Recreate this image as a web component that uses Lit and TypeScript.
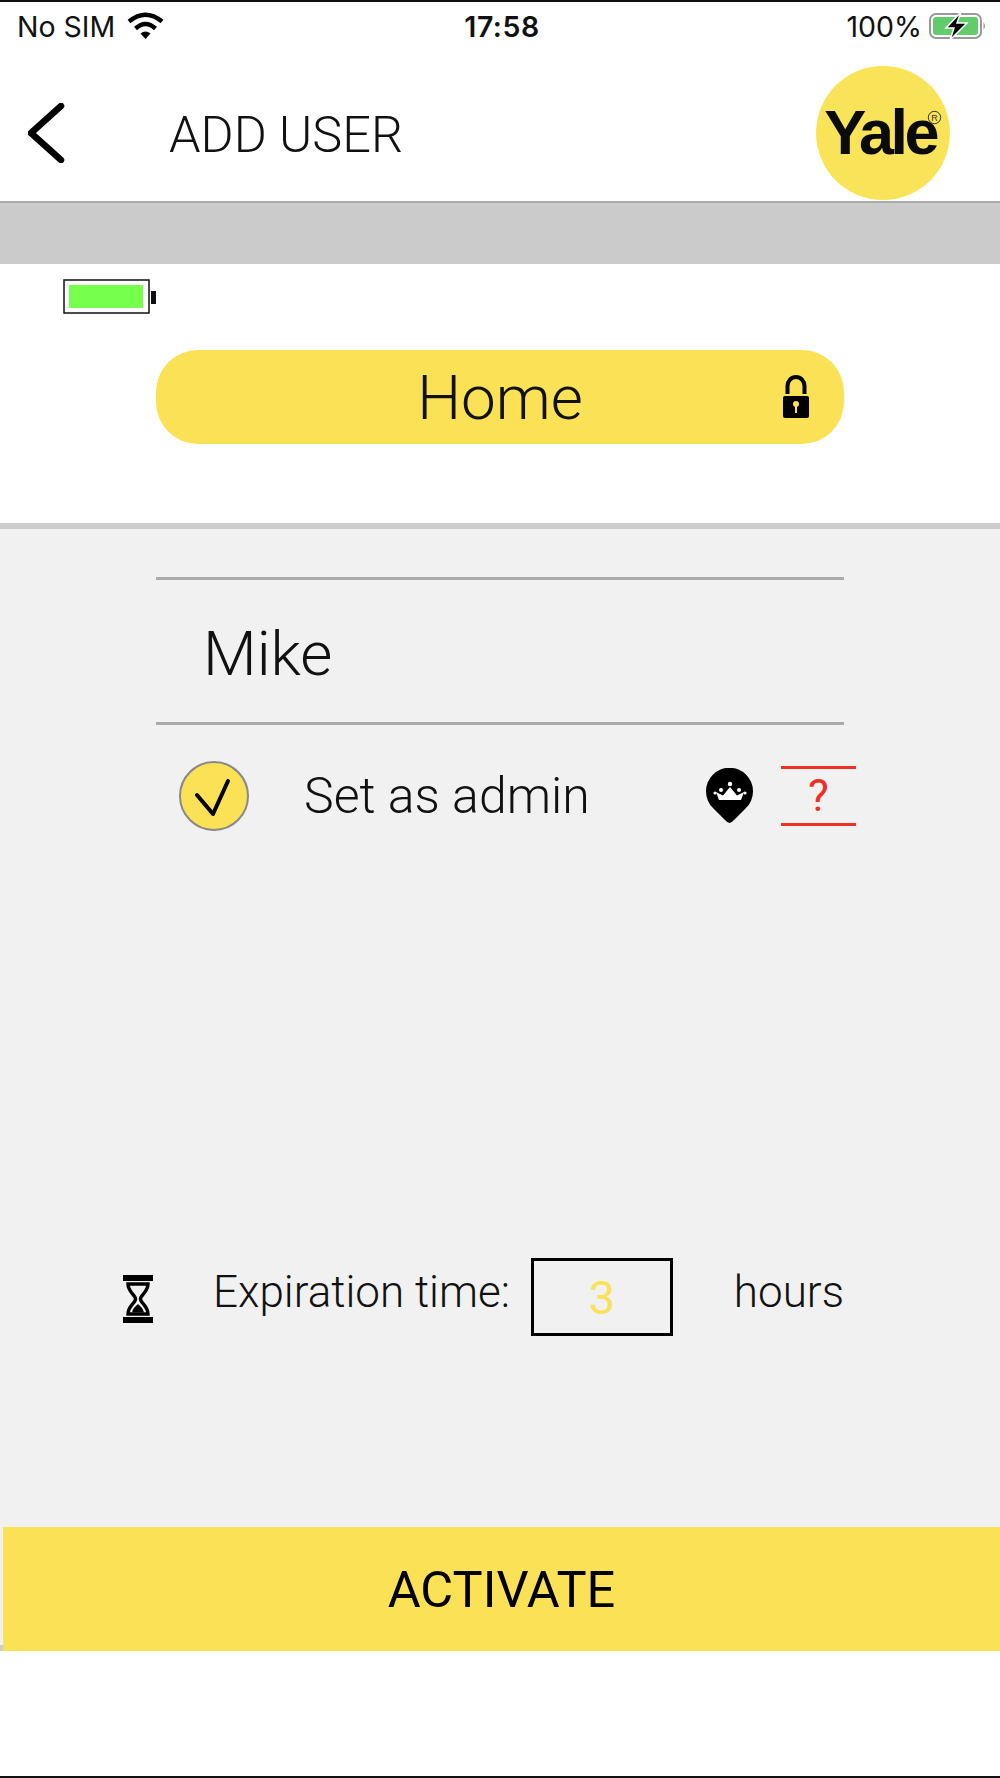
import { LitElement, html, css } from "lit";
import { customElement } from "lit/decorators.js";

@customElement("app-root")
export class AppRoot extends LitElement {
  static styles = css`
    :host { display: block; width: 1000px; height: 1778px; background: #fff; font-family: Roboto, "Liberation Sans", sans-serif; color: #111; overflow: hidden; }
    * { box-sizing: border-box; }
    .page { height: 1778px; display: flex; flex-direction: column; border-top: 2px solid #111; border-bottom: 2px solid #111; }
    .status { height: 48px; flex: none; display: grid; grid-template-columns: 1fr auto 1fr; align-items: center; padding: 0 13px 0 17px; font-size: 28.5px; font-family: Inter, Roboto, sans-serif; }
    .status .left, .status .right { display: flex; align-items: center; }
    .status .left { gap: 12px; }
    .status .right { justify-content: flex-end; gap: 7px; }
    .status .time { font-weight: 600; letter-spacing: 0.5px; }
    .status .sim, .status .pct { font-weight: 400; }
    .status svg { display: block; }
    .header { height: 153px; flex: none; display: flex; align-items: center; border-bottom: 2px solid #aaa; padding: 0 50px 0 28px; }
    .back { display: block; flex: none; margin-top: 14px; }
    .title { font-size: 50.5px; font-weight: 300; margin-left: 103px; flex: 1; line-height: 56px; margin-top: 19px; }
    .logo { width: 134px; height: 134px; border-radius: 50%; background: #f9e459; flex: none; display: flex; align-items: center; justify-content: center; position: relative; margin-top: 14px; }
    .logo span { font-family: "Liberation Sans", sans-serif; font-weight: 700; font-size: 63px; letter-spacing: -3.6px; color: #0a0a0a; line-height: 1; margin-left: -6px; }
    .logo svg { position: absolute; left: 111px; top: 44px; }
    .band { height: 61px; flex: none; background: #cbcbcb; }
    .lockzone { height: 265px; flex: none; border-bottom: 6px solid #ccc; padding: 15px 156px 0 63px; display: flex; flex-direction: column; }
    .pill { margin: 36px 0 0 93px; height: 94px; width: 688px; border-radius: 42px; background: #fae155; display: flex; align-items: center; justify-content: center; position: relative; font-size: 62px; font-weight: 300; }
    .pill svg { position: absolute; left: 626px; top: 25px; }
    .main { flex: 1; background: #f1f1f1; padding: 48px 156px 0; display: flex; flex-direction: column; }
    .name { height: 148px; border-top: 3px solid #aaa; border-bottom: 3px solid #aaa; display: flex; align-items: center; padding: 4px 0 0 47px; font-size: 62px; font-weight: 300; }
    .admin { display: flex; align-items: center; height: 85px; margin-top: 28px; padding-left: 23px; margin-right: -12px; font-size: 50px; font-weight: 300; }
    .check { width: 70px; height: 70px; border-radius: 50%; background: #fae155; border: 2px solid #888; flex: none; display: block; }
    .admin .label { margin-left: 55px; flex: 1; }
    .help { width: 75px; height: 60px; border-top: 3.5px solid #ee3124; border-bottom: 3.5px solid #ee3124; color: #ee3124; font-size: 44px; font-weight: 400; display: flex; align-items: center; justify-content: center; margin-left: 28px; }
    .expire { display: flex; align-items: center; margin: 420px 0 0 -33px; height: 78px; font-size: 44px; font-weight: 300; white-space: nowrap; }
    .expire svg { margin-top: 3px; flex: none; }
    .expire .lbl { margin-left: 60px; width: 368px; margin-top: -10px; }
    .box { width: 142px; height: 78px; border: 3px solid #000; color: #f9e15a; display: flex; align-items: center; justify-content: center; font-size: 47px; font-weight: 400; flex: none; }
    .expire .unit { margin-left: 61px; margin-top: -10px; }
    .actwrap { flex: none; padding-left: 3px; background: linear-gradient(#f1f1f1 calc(100% - 6px), #c8ccd4 calc(100% - 6px)); }
    .activate { height: 124px; background: #fae155; display: flex; align-items: center; justify-content: center; font-size: 50.5px; font-weight: 400; color: #000; }
    .foot { flex: none; height: 125px; background: #fff; }
  `;

  render() {
    return html`<div class="page">
      <div class="status">
        <div class="left"><span class="sim">No SIM</span>
          <svg width="37" height="28" viewBox="0 0 37 28"><path d="M18.5 27 L13.5 21.5 Q18.5 17.5 23.5 21.5Z" fill="#000"/><path d="M8.5 16.5 Q18.5 7.5 28.5 16.5" fill="none" stroke="#000" stroke-width="4.4"/><path d="M2 9.5 Q18.5 -4 35 9.5" fill="none" stroke="#000" stroke-width="4.4"/></svg>
        </div>
        <div class="time">17:58</div>
        <div class="right"><span class="pct">100%</span>
          <svg width="58" height="28" viewBox="0 0 58 28"><rect x="1" y="2" width="51" height="24" rx="6" fill="#fff" stroke="#999" stroke-width="2"/><rect x="4" y="5" width="45" height="18" rx="3" fill="#62cc6c"/><path d="M54.5 10 Q57.5 14 54.5 18Z" fill="#999"/><path d="M32 0 L17 16 H25 L21 28 L38 11 H28Z" fill="#000" stroke="#fff" stroke-width="1.5"/></svg>
        </div>
      </div>
      <div class="header">
        <svg class="back" width="38" height="60" viewBox="0 0 38 60"><path d="M33 3 L3 30 L33 57" fill="none" stroke="#000" stroke-width="6.5" stroke-linecap="round" stroke-linejoin="round"/></svg>
        <div class="title">ADD USER</div>
        <div class="logo"><span>Yale</span>
          <svg width="15" height="15" viewBox="0 0 15 15"><circle cx="7.5" cy="7.5" r="6.2" fill="none" stroke="#333" stroke-width="1"/><text x="7.5" y="10.6" font-size="9" text-anchor="middle" font-family="Liberation Sans" fill="#333">R</text></svg>
        </div>
      </div>
      <div class="band"></div>
      <div class="lockzone">
        <svg width="94" height="35" viewBox="0 0 94 35"><rect x="1" y="1" width="85" height="33" fill="#fff" stroke="#111" stroke-width="1.5"/><rect x="6" y="6" width="74" height="23" fill="#76ff4c"/><rect x="88" y="12" width="5" height="13" fill="#111"/></svg>
        <div class="pill">Home
          <svg width="28" height="44" viewBox="0 0 28 44"><path d="M5.5 19 V11 a8.5 9 0 0 1 17 0 V19" fill="none" stroke="#000" stroke-width="4"/><rect x="1" y="21" width="26" height="22" rx="2" fill="#000"/><circle cx="14" cy="29" r="3" fill="#fae155"/><rect x="13" y="30" width="2" height="8" fill="#fae155"/></svg>
        </div>
      </div>
      <div class="main">
        <div class="name">Mike</div>
        <div class="admin">
          <svg class="check" viewBox="0 0 66 66"><path d="M16 32 L32 51 L47 18" fill="none" stroke="#000" stroke-width="4" stroke-linecap="round" stroke-linejoin="round"/></svg>
          <span class="label">Set as admin</span>
          <svg width="47" height="56" viewBox="0 0 47 56"><path d="M23.5 55 Q21.5 55 19 52 L7 40 A23.5 23.5 0 1 1 40 40 L28 52 Q25.5 55 23.5 55Z" fill="#000"/><path d="M10 24 L13 32 H35 L38 24 L31 27.5 L24 19 L17 27.5Z" fill="#fff"/><circle cx="24" cy="16" r="2.2" fill="#fff"/><circle cx="15" cy="22" r="2" fill="#fff"/><circle cx="33" cy="22" r="2" fill="#fff"/><circle cx="9" cy="25" r="1.6" fill="#fff"/><circle cx="39" cy="25" r="1.6" fill="#fff"/></svg>
          <div class="help">?</div>
        </div>
        <div class="expire">
          <svg width="30" height="48" viewBox="0 0 30 48"><rect x="0" y="0" width="30" height="6" fill="#000"/><rect x="0" y="42" width="30" height="6" fill="#000"/><path d="M5 9 H25 C25 17 17.5 20 17.5 24 C17.5 28 25 31 25 39 H5 C5 31 12.5 28 12.5 24 C12.5 20 5 17 5 9Z" fill="none" stroke="#000" stroke-width="3.4"/><path d="M9 37.5 C10 33 13 31 15 29 C17 31 20 33 21 37.5Z" fill="#000"/></svg>
          <span class="lbl">Expiration time:</span>
          <div class="box">3</div>
          <span class="unit">hours</span>
        </div>
      </div>
      <div class="actwrap"><div class="activate">ACTIVATE</div></div>
      <div class="foot"></div>
    </div>`;
  }
}
